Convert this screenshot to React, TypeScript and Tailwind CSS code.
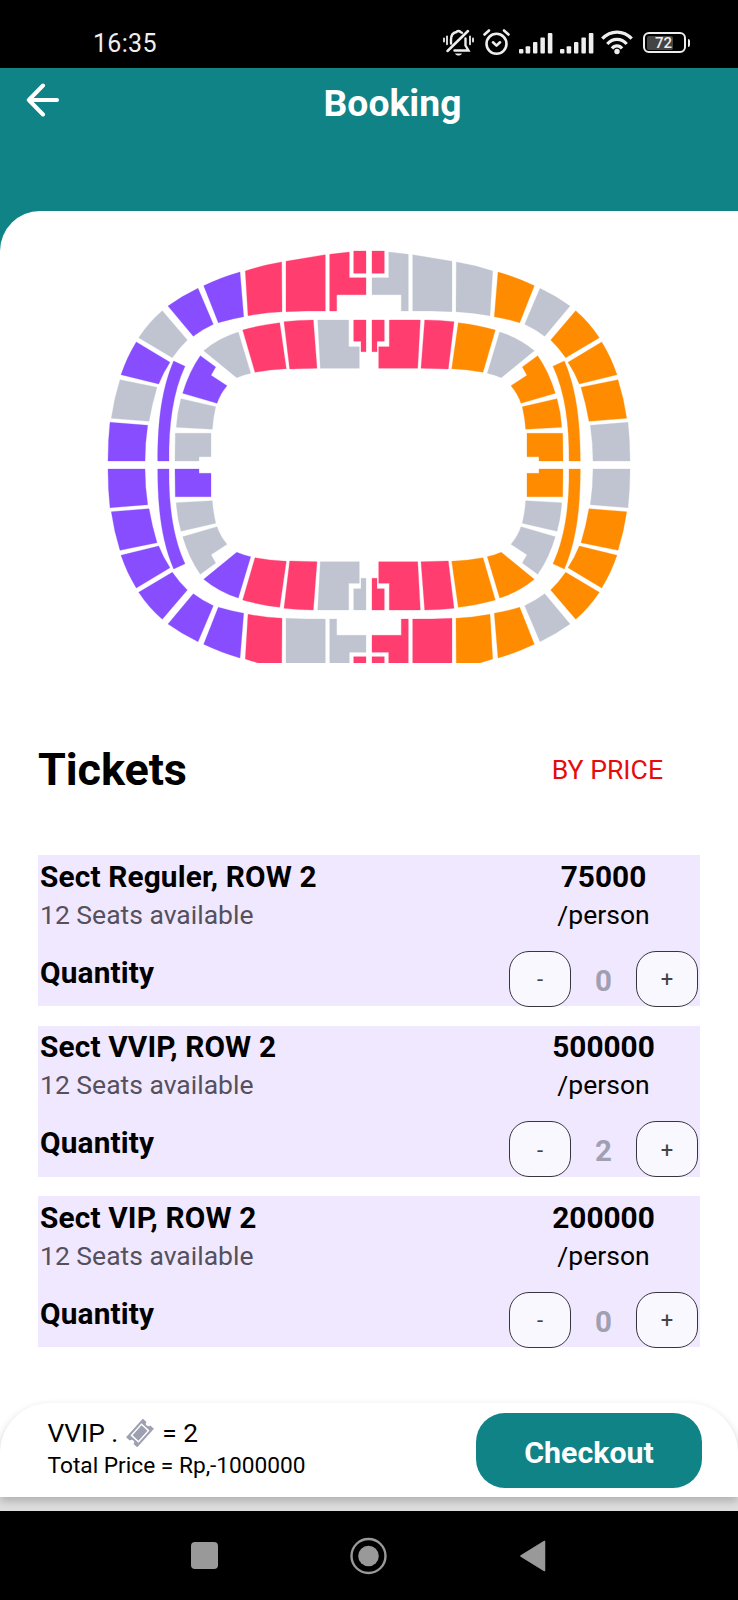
import React from "react";

type Section = { id: string; d: string };

const PALETTE: Record<string, string> = {
  p: "#874dff",
  r: "#ff3d6f",
  o: "#ff8c00",
  g: "#c0c4d0",
};

// One quarter of the arena; the other three are reflections of it.
const SECTIONS: Section[] = [
  { id: "outer-1", d: "M203.7 285.7Q222 277 240 272L243.7 316.7Q231 319 218.3 322.7Z" },
  { id: "outer-2", d: "M168 306Q182 296 198 288.3L213.3 324.3Q203 329 193.3 336.3Z" },
  { id: "outer-3", d: "M162.3 310.7L187.3 340Q179 348 172.3 357.7L138.7 337.7Q149 322 162.3 310.7Z" },
  { id: "outer-4", d: "M136.3 342L170 362.3Q163 373 158.7 384L121 374.7Q127 357 136.3 342Z" },
  { id: "outer-5", d: "M120 379.7L157 387.3Q152 404 149 421.3L111.3 418.3Q114 399 120 379.7Z" },
  { id: "outer-6", d: "M110 422.3L147.7 425.3Q145 443 145 461H108Q108 441 110 422.3Z" },
  { id: "arc", d: "M173.7 361L185 366.3C173 392 168.5 425 169 461H157.7C157.7 420 162 388 173.7 361Z" },
  { id: "inner-corner", d: "M203.7 350.7Q219 338 238.3 332L250.7 373.3Q243 375 236.7 377.7Z" },
  { id: "inner-1", d: "M200.3 355.7L215.7 367L211 375.3L227 385.7Q220 394 217 403.3L182.7 393.3Q189 372 200.3 355.7Z" },
  { id: "inner-2", d: "M181 398.7L215.7 406.7Q213 418 212.3 429.3L176.3 427.3Q177 413 181 398.7Z" },
  { id: "inner-3", d: "M175.3 433.3H211V456.7H199V461H175Z" },
  { id: "top-1", d: "M245.3 271Q263 265 281.7 262L282 311.7Q265 312.5 248 315.7Z" },
  { id: "top-2", d: "M286 261.3L325.3 254.7V311H306L286 311.7Z" },
  { id: "top-3", d: "M329.7 254.3L349.3 252V277.7H366V294.7H336.7V311H329.7Z" },
  { id: "top-4", d: "M353.7 251H366V273.3H353.7Z" },
  { id: "field-1", d: "M242.7 330Q260 325 279.7 322.7L286.3 368.7Q270 369.5 255 372.3Z" },
  { id: "field-2", d: "M284 321.7Q299 320 313.3 320L317 368.3L289.7 369Z" },
  { id: "field-3", d: "M317.7 320H348.7V346.7H359.3V368.3H320.3Z" },
  { id: "field-4", d: "M353.7 320H366V351.7H361V341.3H353.7Z" },
];

const QUARTERS = [
  { name: "nw", transform: "", colors: "ppgpgppgpggrrrrrrgr" },
  { name: "ne", transform: "translate(738 0) scale(-1 1)", colors: "ogooogogooogggrorrr" },
  { name: "sw", transform: "translate(0 930) scale(1 -1)", colors: "ppppppppggprggrrrgg" },
  { name: "se", transform: "translate(738 930) scale(-1 -1)", colors: "ogooogooggoorrrorrr" },
];

const TICKETS = [
  { name: "Sect Reguler, ROW 2", price: 75000, qty: 0 },
  { name: "Sect VVIP, ROW 2", price: 500000, qty: 2 },
  { name: "Sect VIP, ROW 2", price: 200000, qty: 0 },
];

function SeatMap() {
  return (
    <svg className="ml-[100px] block h-[422.5px] w-[540px] shrink-0" viewBox="100 240 540 422.5">
      {QUARTERS.map((q) => (
        <g key={q.name} transform={q.transform} strokeWidth="0.3">
          {SECTIONS.map((s, i) => (
            <path key={s.id} d={s.d} fill={PALETTE[q.colors[i]]} stroke={PALETTE[q.colors[i]]} />
          ))}
        </g>
      ))}
    </svg>
  );
}

function Signal() {
  return (
    <svg className="h-6 w-[34px]" viewBox="0 0 34 24" fill="#eee">
      <rect x="0" y="18" width="4.4" height="4.5" rx="1" />
      <rect x="6.6" y="15.3" width="4.6" height="7.2" rx="1" />
      <rect x="14" y="11" width="4.4" height="11.5" rx="1" />
      <rect x="21.4" y="6.5" width="4.5" height="16" rx="1" />
      <rect x="28.8" y="2" width="4.6" height="20.5" rx="1" />
    </svg>
  );
}

function StatusBar() {
  return (
    <div className="flex h-[68px] shrink-0 items-start bg-black">
      <div className="ml-[93px] mt-[29px] w-[350px] text-[25px] leading-[30px] tracking-[0.3px] text-[#eee]">16:35</div>
      <svg className="mt-[28px] h-[30px] w-[32px]" viewBox="0 0 32 30" fill="none" stroke="#eee" strokeWidth="2.4" strokeLinecap="round">
        <path d="M1 10.5v3M4 8.3v8M30 10.5v3M27 8.3v8" strokeWidth="1.8" />
        <path d="M4.5 23L25 3" strokeWidth="2.5" />
        <path d="M8 15.5V11.5C8 7 10.500 4.600 13.500 4C14 2.700 16.500 2.700 17.500 4L19 4.800" />
        <path d="M22.500 10.500V17.500L25.500 22.500H11.500" />
        <path d="M12 25.500h7c-1.500 2.800-5.500 2.800-7 0Z" fill="#eee" stroke="none" />
      </svg>
      <svg className="ml-[7px] mt-[28px] h-[30px] w-[29px]" viewBox="0 0 29 30" fill="none" stroke="#eee" strokeWidth="2.6" strokeLinecap="round" strokeLinejoin="round">
        <circle cx="14.5" cy="15.8" r="10" />
        <path d="M2.500 6.500L7 2.500M26.500 6.500L22 2.500M11 14.300l3.500 3.300 3.500-3.300" />
      </svg>
      <div className="ml-2 mt-[31px] flex gap-[7px]">
        <Signal />
        <Signal />
      </div>
      <svg className="ml-[7px] mt-[30px] h-[25px] w-[32px]" viewBox="0 0 32 25" fill="none" stroke="#eee" strokeWidth="3.2">
        <path d="M1.300 8.700C9.500-.2 22.500-.2 30.700 8.700" />
        <path d="M6.300 14C11.700 7.700 20.300 7.700 25.700 14" />
        <path d="M11 18.500C13.700 15 18.300 15 21 18.500" />
        <circle cx="16" cy="21.5" r="2.7" fill="#eee" stroke="none" />
      </svg>
      <div className="ml-[10px] mt-[32px] flex items-center gap-[2px]">
        <div className="flex h-[21px] w-[43px] items-center rounded-[6px] border-2 border-[#eee] p-[2px]">
          <div className="flex h-[14px] w-[26px] items-center rounded-[2px] bg-[#444] pl-[8px] text-[15px] font-medium leading-[14px] text-[#eee]">72</div>
        </div>
        <div className="h-[8px] w-[2px] rounded-r bg-[#eee]" />
      </div>
    </div>
  );
}

function StepButton({ label }: { label: string }) {
  return (
    <button className="flex h-[56px] w-[62px] items-center justify-center rounded-[20px] border-[1.5px] border-[#38353e] bg-[#faf8ff] text-[22px] leading-[52px] text-[#444]">
      <span className="pt-[3px]">{label}</span>
    </button>
  );
}

function TicketCard({ name, price, qty }: { name: string; price: number; qty: number }) {
  return (
    <div className="flex h-[151px] justify-between bg-[#f0e8ff] pl-[2px] pr-[2px]">
      <div className="flex flex-col">
        <div className="mt-[1.5px] text-[29.8px] font-bold leading-[40px] tracking-[0.15px]">{name}</div>
        <div className="text-[26.5px] leading-[36px] text-[#55505c]">12 Seats available</div>
        <div className="mt-[20px] text-[29.8px] font-bold leading-[40px] tracking-[0.15px]">Quantity</div>
      </div>
      <div className="flex w-[189px] flex-col">
        <div className="mt-[1.5px] text-center text-[29.8px] font-bold leading-[40px]">{price}</div>
        <div className="text-center text-[26.5px] leading-[36px]">/person</div>
        <div className="mt-[18px] flex justify-between">
          <StepButton label="-" />
          <div className="pt-[5px] text-[29.5px] font-bold leading-[50px] text-[#a0a0b0]">{qty}</div>
          <StepButton label="+" />
        </div>
      </div>
    </div>
  );
}

export default function App() {
  return (
    <div className="flex h-[1600px] w-[738px] flex-col overflow-hidden bg-white font-[Roboto,sans-serif] text-black">
      <StatusBar />
      <header className="flex h-[143px] shrink-0 items-start bg-[#108387]">
        <svg className="ml-[25.5px] mt-[15px] h-[34px] w-[34px]" viewBox="0 0 34 34" fill="none" stroke="#fff" strokeWidth="4" strokeLinecap="round" strokeLinejoin="round">
          <path d="M31 17H2.800M17 2.500L2.800 17L17 31.500" />
        </svg>
        <h1 className="mt-[14px] w-[666px] text-center text-[37.3px] font-bold leading-[42px] text-white">Booking</h1>
      </header>
      <div className="flex h-[1192px] shrink-0 flex-col bg-[#108387]">
        <main className="flex grow flex-col rounded-tl-[40px] bg-white pt-[29px]">
          <SeatMap />
          <div className="mt-[77.5px] flex h-[60px] items-center justify-between pl-[38px] pr-[75px]">
            <h2 className="text-[45px] font-bold leading-[60px] tracking-[-0.1px]">Tickets</h2>
            <span className="text-[26.6px] text-[#e60c0c]">BY PRICE</span>
          </div>
          <div className="mx-[38px] mt-[55px] flex flex-col gap-[19.5px]">
            {TICKETS.map((t) => (
              <TicketCard key={t.name} {...t} />
            ))}
          </div>
        </main>
      </div>
      <div className="flex h-[108px] shrink-0 flex-col bg-linear-to-b from-white from-40% to-[#dedede] to-90%">
        <footer className="flex h-[94px] justify-between rounded-t-[50px] bg-white pl-[47.5px] pr-[36px] shadow-[0_4px_8px_rgba(0,0,0,0.22)]">
          <div className="pt-[13px]">
            <div className="flex h-[34px] items-center text-[26.3px] leading-[34px]">
              <span>VVIP .</span>
              <svg className="mx-[8px] h-[28px] w-[28px]" viewBox="0 0 28 28">
                <g transform="rotate(-48 14 14)">
                  <path d="M1.500 6.500H26.500V11.500A2.500 2.500 0 0 0 26.500 16.500V21.500H1.500V16.500A2.500 2.500 0 0 0 1.500 11.500Z" fill="#9ca0b0" />
                  <path d="M6.500 9.300H21.500V18.700H6.500Z" fill="#9ca0b0" stroke="#fff" strokeWidth="1.5" />
                </g>
              </svg>
              <span>= 2</span>
            </div>
            <div className="text-[22.7px] leading-[31px]">Total Price = Rp,-1000000</div>
          </div>
          <button className="mt-[10px] flex h-[75px] w-[226px] items-center justify-center rounded-[29px] bg-[#108387] pt-[4px] text-[30.3px] font-bold text-white">
            Checkout
          </button>
        </footer>
      </div>
      <nav className="flex h-[89px] shrink-0 items-center bg-black">
        <div className="ml-[191px] h-[27px] w-[27px] rounded-[4px] bg-[#999]" />
        <svg className="ml-[132px] h-[38px] w-[38px]" viewBox="0 0 38 38">
          <circle cx="18.5" cy="19" r="17" fill="none" stroke="#999" strokeWidth="2.4" />
          <circle cx="18.5" cy="19" r="10.3" fill="#999" />
        </svg>
        <svg className="ml-[131.5px] h-[32px] w-[26px]" viewBox="0 0 26 32">
          <path d="M24.500 1.500V30.500L1 16Z" fill="#999" stroke="#999" strokeWidth="1.5" strokeLinejoin="round" />
        </svg>
      </nav>
    </div>
  );
}
